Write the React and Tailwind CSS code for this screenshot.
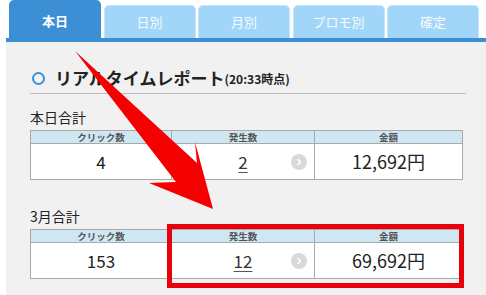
import React from 'react';

const tabs = ['本日', '日別', '月別', 'プロモ別', '確定'];

const Chevron = () => (
  <span className="absolute right-[7px] top-1/2 -translate-y-1/2 w-[16px] h-[16px] rounded-full bg-[#d9d9d9] flex items-center justify-center">
    <svg width="8" height="8" viewBox="0 0 8 8">
      <path d="M3 1.5 L5.5 4 L3 6.5" fill="none" stroke="#fff" strokeWidth="1.6" strokeLinecap="round" strokeLinejoin="round" />
    </svg>
  </span>
);

const SummaryTable = ({ label, clicks, count, amount }) => (
  <div>
    <div className="text-[14px] leading-[20px] text-[#222]">{label}</div>
    <div className="mt-[3px] w-[433px] grid grid-cols-[140px_143px_1fr] border border-[#a9a9a9] bg-white">
      {['クリック数', '発生数', '金額'].map((h, i) => (
        <div
          key={h}
          className={`h-[13px] bg-[#cfe6f3] border-b border-[#a9a9a9] text-[9.5px] leading-[13px] font-bold text-[#555] text-center ${i > 0 ? 'border-l' : ''}`}
        >
          {h}
        </div>
      ))}
      <div className="h-[35px] flex items-center justify-center text-[17px] text-[#222]">{clicks}</div>
      <div className="relative h-[35px] flex items-center justify-center border-l border-[#a9a9a9] text-[17px] text-[#333]">
        <span className="underline decoration-[#555] underline-offset-[3px]">{count}</span>
        <Chevron />
      </div>
      <div className="h-[35px] flex items-center justify-center border-l border-[#a9a9a9] text-[18px] text-[#222]">{amount}</div>
    </div>
  </div>
);

export default function App() {
  return (
    <div
      className="relative w-[486px] h-[295px] overflow-hidden bg-white"
      style={{ fontFamily: '"Noto Sans CJK JP", "Noto Sans", sans-serif' }}
    >
      <div className="ml-[6px] h-full flex flex-col">
        {/* Tabs */}
        <div className="h-[38px] pl-[3px] flex items-end gap-[2.5px]">
          {tabs.map((t, i) => (
            <div
              key={t}
              className={
                i === 0
                  ? 'w-[92px] h-[38px] rounded-t-[5px] bg-[#3c8fd5] text-white font-bold text-[13px] flex items-center justify-center pt-[3px]'
                  : 'w-[92px] h-[33px] rounded-t-[5px] bg-[#a2d6f8] border border-b-0 border-[#c4e5fb] text-[#f4faff] text-[13px] flex items-center justify-center'
              }
            >
              {t}
            </div>
          ))}
        </div>
        <div className="h-[4px] bg-[#3c8fd5]" />

        {/* Content */}
        <div className="flex-1 bg-[#f2f1f2] pl-[24px] pr-[20px]">
          <div className="mt-[21px] h-[31px] border-b border-[#bdbdbd] flex items-center">
            <span className="w-[13px] h-[13px] rounded-full border-[2.5px] border-[#3d8fd4] ml-[2px] mr-[10px]" />
            <span className="text-[17px] font-bold text-[#222]">リアルタイムレポート</span>
            <span className="text-[12px] font-bold text-[#222] mt-[2px]">(20:33時点)</span>
          </div>

          <div className="mt-[13px]">
            <SummaryTable label="本日合計" clicks="4" count="2" amount="12,692円" />
          </div>
          <div className="mt-[26px]">
            <SummaryTable label="3月合計" clicks="153" count="12" amount="69,692円" />
          </div>
        </div>
      </div>

      {/* Annotation overlays */}
      <svg className="absolute inset-0 pointer-events-none" width="486" height="295" viewBox="0 0 486 295">
        <polygon points="75,51 197,163 195,142 213,209 149,183 176,182" fill="#f40000" />
      </svg>
      <div className="absolute left-[167px] top-[224px] w-[297px] h-[64px] border-[5px] border-[#e8000b] pointer-events-none" />
    </div>
  );
}
